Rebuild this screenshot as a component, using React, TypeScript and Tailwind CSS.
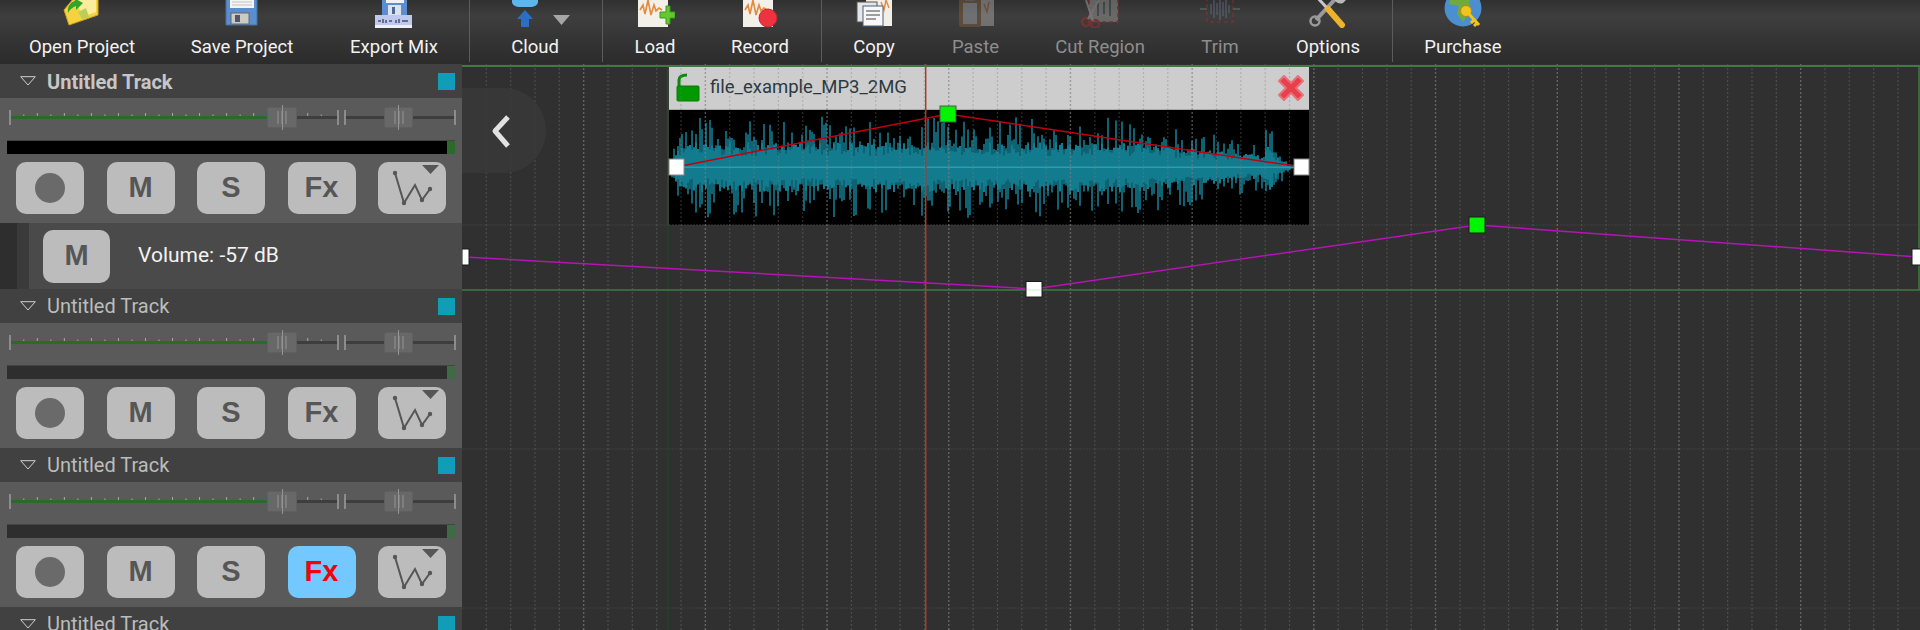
import type { ReactNode } from 'react';

// simple seeded noise so the waveform stays the same on every render
function noise(seed: number) {
  let s = seed;
  return () => {
    s = (s * 16807) % 2147483647;
    return (s - 1) / 2147483646;
  };
}

function waveEnv(x: number) {
  if (x < 14) return 0.15 + (x / 14) * 0.85;
  if (x < 470) return 1;
  if (x < 596) return 1 - ((x - 470) / 126) * 0.55;
  if (x < 604) return 0.95;
  if (x < 625) return 0.5 * (1 - (x - 604) / 21);
  return 0;
}

function buildWave() {
  const rnd = noise(4711);
  let outer = '';
  let inner = '';
  const cy = 56.7;
  for (let x = 3; x < 626; x += 2) {
    const e = waveEnv(x);
    const top = e * (17 + Math.pow(rnd(), 2.4) * 33);
    const bottom = e * (17 + Math.pow(rnd(), 2.4) * 33);
    const innerTop = e * (11 + rnd() * 14);
    const innerBottom = e * (11 + rnd() * 14);
    outer += `M${x} ${(cy - top).toFixed(1)}V${(cy + bottom).toFixed(1)}`;
    inner += `M${x} ${(cy - innerTop).toFixed(1)}V${(cy + innerBottom).toFixed(1)}`;
  }
  return { outer, inner };
}

const wave = buildWave();

const IconOpen = (
  <svg viewBox="0 0 40 40" className="w-10 h-10">
    <path d="M2 22 L7 37 L36 27 L36 10 L12 10 Z" fill="#f5d23e" stroke="#c9a020" />
    <path d="M14 12 L34 11 L34 24 L20 29 Z" fill="#fbec9e" />
    <path d="M16 24 L24 20 L27 29 L20 31 Z" fill="#b9cf58" />
    <path d="M6 25 C5 18 9 14 13 13 L12 10 L21 15 L14 22 L14 18 C11 19 8 21 6 25 Z" fill="#2fa52a" />
  </svg>
);
const IconSave = (
  <svg viewBox="0 0 40 40" className="w-10 h-10">
    <path d="M4 2 H35 V37 H4 Z" fill="#5b8ed0" stroke="#44709f" />
    <rect x="8" y="2" width="24" height="18" fill="#f4f4f4" />
    <path d="M10 14 H30 M10 17 H30" stroke="#c4c4c4" />
    <rect x="9" y="25" width="18" height="11" fill="#cbcbc4" stroke="#666" />
    <rect x="13" y="27" width="5" height="7" fill="#556" />
  </svg>
);
const IconExport = (
  <svg viewBox="0 0 40 40" className="w-10 h-10">
    <path d="M8 0 H33 V28 H8 Z" fill="#5b8ed0" />
    <rect x="12" y="0" width="18" height="15" fill="#f2f2f2" />
    <rect x="14" y="17" width="13" height="10" fill="#dde3ee" />
    <rect x="18" y="19" width="3" height="7" fill="#4d6a94" />
    <rect x="1" y="27" width="37" height="13" fill="#bfc9ee" />
    <rect x="1" y="37" width="37" height="3" fill="#eef0f8" />
    <path d="M4 33h3M9 31v4M12 32v3M15 33h3M22 32v3M25 31v4M28 33h6" stroke="#44546a" strokeWidth="1.5" />
  </svg>
);
const IconCloud = (
  <svg viewBox="0 0 70 40" className="w-[70px] h-10">
    <path d="M12 8 H38 V14 C38 17 34 19 30 19 H20 C16 19 12 17 12 14 Z" fill="#5db5ee" />
    <path d="M25 22 L33 31 H29 V39 H21 V31 H17 Z" fill="#2b6fc4" />
    <path d="M53 27 H70 L61.5 37 Z" fill="#a6a6a6" />
  </svg>
);
const Page = () => (
  <>
    <rect x="3" y="6" width="30" height="33" fill="#f3f0ea" />
    <path d="M5 22 l3 -5 l2 9 l3 -14 l3 15 l3 -10 l2 6 l3 -3 l3 2" stroke="#e58a3c" strokeWidth="1.6" fill="none" />
  </>
);
const IconLoad = (
  <svg viewBox="0 0 40 40" className="w-10 h-10">
    <Page />
    <path d="M25 24 H31 V18 H35 V24 H40 V30 H35 V36 H31 V30 H25 Z" fill="#63c832" stroke="#3f9a1e" />
  </svg>
);
const IconRecord = (
  <svg viewBox="0 0 40 40" className="w-10 h-10">
    <Page />
    <circle cx="28" cy="30" r="9" fill="#ee3340" stroke="#c4242e" />
  </svg>
);
const IconCopy = (
  <svg viewBox="0 0 40 40" className="w-10 h-10">
    <rect x="12" y="4" width="26" height="34" fill="#f2efe9" />
    <path d="M27 14 l3 8 l2 -10 l3 8" stroke="#e58a3c" strokeWidth="1.4" fill="none" />
    <rect x="3" y="14" width="20" height="20" fill="#e6e6e6" stroke="#555" />
    <rect x="9" y="18" width="20" height="20" fill="#f8f8f8" stroke="#47607e" />
    <path d="M12 23 H26 M12 27 H26 M12 31 H22" stroke="#444" />
  </svg>
);
const IconPaste = (
  <svg viewBox="0 0 40 40" className="w-10 h-10 opacity-35">
    <rect x="14" y="4" width="24" height="34" fill="#d8d6d2" />
    <path d="M28 16 l3 8 l2 -10" stroke="#c87a3c" strokeWidth="1.4" fill="none" />
    <rect x="3" y="10" width="22" height="29" rx="2" fill="#9c6b3a" />
    <rect x="7" y="15" width="14" height="21" fill="#c8d0d6" />
    <rect x="9" y="7" width="10" height="6" fill="#999" />
  </svg>
);
const IconCut = (
  <svg viewBox="0 0 40 40" className="w-10 h-10 opacity-35">
    <rect x="9" y="5" width="29" height="29" fill="#bbb" stroke="#d22" strokeDasharray="4 3" strokeWidth="1.5" />
    <path d="M18 10 v18 M24 14 v12 M30 10 v18" stroke="#566" strokeWidth="2" />
    <circle cx="6" cy="34" r="4" fill="none" stroke="#e02020" strokeWidth="2.5" />
    <circle cx="15" cy="36" r="4" fill="none" stroke="#e02020" strokeWidth="2.5" />
    <path d="M8 31 L20 10 M13 33 L6 12" stroke="#d8d8d8" strokeWidth="2" />
  </svg>
);
const IconTrim = (
  <svg viewBox="0 0 40 40" className="w-10 h-10 opacity-35">
    <rect x="7" y="9" width="26" height="25" fill="none" stroke="#e02020" strokeDasharray="4 3" strokeWidth="1.5" />
    <path d="M0 21 H7 M33 21 H40" stroke="#8aa" strokeWidth="1.5" />
    <path d="M11 16 v10 M14 12 v18 M17 15 v12 M20 10 v22 M23 14 v14 M26 12 v18 M29 17 v8" stroke="#7f93b8" strokeWidth="1.4" />
  </svg>
);
const IconOptions = (
  <svg viewBox="0 0 40 40" className="w-10 h-10">
    <path d="M30 8 L8 32" stroke="#9a9a9a" strokeWidth="4" />
    <circle cx="7" cy="33" r="4.5" fill="none" stroke="#9a9a9a" strokeWidth="2.5" />
    <path d="M26 6 a7 7 0 0 0 9 9 l3 -3 l-5 -1 l-1 -5 z" fill="#b8b8b8" />
    <path d="M6 6 L20 21" stroke="#c8c8c8" strokeWidth="3" />
    <path d="M20 21 L34 37" stroke="#eeb32c" strokeWidth="6" strokeLinecap="round" />
  </svg>
);
const IconPurchase = (
  <svg viewBox="0 0 40 40" className="w-10 h-10">
    <circle cx="20" cy="20" r="18.5" fill="#4c8fd0" />
    <path d="M8 8 C14 4 24 4 30 8 L26 14 L28 22 L20 34 L14 26 L16 18 L6 16 Z" fill="#6faa3c" />
    <circle cx="23" cy="23" r="5.5" fill="#f2c41e" stroke="#b88a10" />
    <path d="M26 26 L36 37 M31 32 L28 35 M34 35 L31 38" stroke="#f2c41e" strokeWidth="3" />
  </svg>
);

const toolbar: { label: string; width: string; icon: ReactNode; off?: boolean; sep?: string }[] = [
  { label: 'Open Project', width: 'w-[164px]', icon: IconOpen },
  { label: 'Save Project', width: 'w-[156px]', icon: IconSave },
  { label: 'Export Mix', width: 'w-[148px]', icon: IconExport, sep: 'ml-px' },
  { label: 'Cloud', width: 'w-[130px]', icon: IconCloud, sep: 'ml-[2px]' },
  { label: 'Load', width: 'w-[104px]', icon: IconLoad },
  { label: 'Record', width: 'w-[106px]', icon: IconRecord, sep: 'ml-2' },
  { label: 'Copy', width: 'w-[104px]', icon: IconCopy },
  { label: 'Paste', width: 'w-[99px]', icon: IconPaste, off: true },
  { label: 'Cut Region', width: 'w-[150px]', icon: IconCut, off: true },
  { label: 'Trim', width: 'w-[90px]', icon: IconTrim, off: true },
  { label: 'Options', width: 'w-[126px]', icon: IconOptions, sep: 'ml-px' },
  { label: 'Purchase', width: 'w-[140px]', icon: IconPurchase },
];

function Toolbar() {
  return (
    <div className="flex h-16 shrink-0 overflow-hidden bg-linear-to-b from-[#303030] via-[#3e3e3e] via-25% to-[#2b2b2b]">
      {toolbar.map((t) => (
        <div key={t.label} className="flex">
          <div className={`flex flex-col items-center ${t.width}`}>
            <div className="-mt-3 flex h-10 shrink-0 justify-center">{t.icon}</div>
            <span className={`mt-[9px] text-[18.5px] leading-5 ${t.off ? 'text-[#8e8e8e]' : 'text-[#f2f2f2]'}`}>
              {t.label}
            </span>
          </div>
          {t.sep && <div className={`h-[62px] w-px bg-[#5c5c5c] ${t.sep}`} />}
        </div>
      ))}
    </div>
  );
}

function PadButton({ children, active }: { children: ReactNode; active?: boolean }) {
  return (
    <div
      className={`relative flex h-[52px] w-[68px] items-center justify-center rounded-[10px] font-['Liberation_Sans'] text-[29px] font-bold ${
        active ? 'bg-[#73c8ff] text-[#f4000f]' : 'bg-[#bcbcbc] text-[#565656]'
      }`}
    >
      {children}
    </div>
  );
}

function EnvelopeGlyph() {
  return (
    <svg viewBox="0 0 68 52" className="absolute inset-0 h-full w-full">
      <path d="M17 11 L26 41 L37 23 L44 38 L52 27" fill="none" stroke="#565656" strokeWidth="2" />
      <circle cx="17" cy="11" r="2.2" fill="#565656" />
      <circle cx="26" cy="41" r="2.2" fill="#565656" />
      <circle cx="44" cy="38" r="2.2" fill="#565656" />
      <circle cx="52" cy="27" r="2.2" fill="#565656" />
      <path d="M44 3 H61 L52.5 12 Z" fill="#565656" />
    </svg>
  );
}

function Thumb() {
  return (
    <div className="flex h-[21px] items-center justify-center gap-[2px] rounded-[2px] border border-[#5f5f5f] bg-[#686868]">
      <div className="h-[13px] w-[2px] bg-[#7e7e7e]" />
      <div className="relative flex h-[13px] w-[2px] items-center justify-center bg-[#7e7e7e]">
        <div className="h-[25px] w-px shrink-0 bg-[#949494]" />
      </div>
      <div className="h-[13px] w-[2px] bg-[#7e7e7e]" />
    </div>
  );
}

function SliderRow() {
  const ticks = Array.from({ length: 23 }, (_, i) => 23.3 + i * 13.52).filter((x) => x < 262 || x > 300);
  return (
    <div className="relative flex h-[38px] items-center pl-[9px]">
      <svg className="absolute left-0 top-0 h-[38px] w-[340px]" viewBox="0 0 340 38">
        {ticks.map((x, i) => {
          const tall = Math.round((x - 23.3) / 13.52) % 2 === 1;
          return <rect key={i} x={x} y={tall ? 15 : 16.5} width="1" height={tall ? 3 : 1.5} fill="#a8a8a8" />;
        })}
      </svg>
      <div className="h-[15px] w-[2px] bg-[#8c8c8c]" />
      <div className="h-[3px] w-[256px] bg-[#2c6a2c]" />
      <div className="w-[30px]">
        <Thumb />
      </div>
      <div className="h-[3px] w-[40px] bg-[#3e3e3e]" />
      <div className="h-[15px] w-[2px] bg-[#8c8c8c]" />
      <div className="w-[5px]" />
      <div className="h-[15px] w-[2px] bg-[#8c8c8c]" />
      <div className="h-[3px] w-[38px] bg-[#3e3e3e]" />
      <div className="w-[29px]">
        <Thumb />
      </div>
      <div className="h-[3px] w-[41px] bg-[#3e3e3e]" />
      <div className="h-[15px] w-[2px] bg-[#8c8c8c]" />
    </div>
  );
}

function TrackHeader({ bold }: { bold?: boolean }) {
  return (
    <div className="flex h-[34px] shrink-0 items-center bg-[#414141] pl-5 pr-[7px]">
      <svg viewBox="0 0 16 10" className="h-[10px] w-4">
        <path d="M0.7 0.7 H15.3 L8 9 Z" fill="none" stroke="#d0d0d0" strokeWidth="1" />
      </svg>
      <span className={`ml-[11px] text-[20px] leading-6 ${bold ? 'mt-px font-bold text-[#c6c6c6]' : 'text-[#bcbcbc]'}`}>
        Untitled Track
      </span>
      <div className="ml-auto h-[17px] w-[17px] bg-[#119db7]" />
    </div>
  );
}

function Track({ selected, fxOn }: { selected?: boolean; fxOn?: boolean }) {
  return (
    <>
      <TrackHeader bold={selected} />
      <div className="h-[125px] shrink-0 bg-[#5a5a5a]">
        <SliderRow />
        <div className="ml-[7px] mt-1 flex h-[14px] w-[448px] border-t border-[#444444]">
          <div className={`flex-1 ${selected ? 'bg-black' : 'bg-[#2e2e2e]'}`} />
          <div className={`w-2 ${selected ? 'bg-[#2c6a2c]' : 'bg-[#3f6a46]'}`} />
        </div>
        <div className="ml-4 mt-2 flex w-[430px] justify-between">
          <PadButton>
            <div className="h-[30px] w-[30px] rounded-full bg-[#6a6a6a]" />
          </PadButton>
          <PadButton>M</PadButton>
          <PadButton>S</PadButton>
          <PadButton active={fxOn}>Fx</PadButton>
          <PadButton>
            <EnvelopeGlyph />
          </PadButton>
        </div>
      </div>
    </>
  );
}

function AutomationRow() {
  return (
    <div className="flex h-[66px] shrink-0 items-center bg-[#4a4a4a]">
      <div className="h-full w-[17px] bg-[#2e2e2e]" />
      <div className="h-full w-3 bg-[#3a3a3a]" />
      <div className="ml-[14px] flex h-[53px] w-[67px] items-center justify-center rounded-[10px] bg-[#bcbcbc] font-['Liberation_Sans'] text-[29px] font-bold text-[#565656]">
        M
      </div>
      <span className="ml-7 text-[21px] text-[#f2f2f2]">Volume: -57 dB</span>
    </div>
  );
}

function Sidebar() {
  return (
    <div className="flex w-[462px] shrink-0 flex-col overflow-hidden">
      <Track selected />
      <AutomationRow />
      <Track />
      <Track fxOn />
      <TrackHeader />
    </div>
  );
}

function GridLines() {
  const cols = Array.from({ length: 60 }, (_, i) => 486.3 + i * 24.34);
  return (
    <svg viewBox="462 64 1458 566" className="absolute inset-0 h-full w-full">
      {[225, 449, 608].map((y) => (
        <path key={y} d={`M462 ${y}H1920`} stroke="#3f3f3f" strokeDasharray="2 1" />
      ))}
      {cols.map((x, i) => (
        <path
          key={x}
          d={`M${x} 64V630`}
          stroke="#808080"
          strokeOpacity={(i - 4) % 5 === 0 ? 0.65 : 0.36}
          strokeDasharray="2 2"
          strokeWidth={(i - 4) % 5 === 0 ? 1.4 : 1.2}
        />
      ))}
    </svg>
  );
}

function Clip() {
  return (
    <div className="absolute left-[207px] top-[3px] flex h-[158px] w-[640px] flex-col">
      <div className="flex h-[43px] shrink-0 items-center border-b border-[#a8a8a8] bg-[#cdcdcd]">
        <svg viewBox="0 0 24 30" className="ml-[7px] h-[30px] w-6">
          <path d="M3 14 V7 C3 3 6 2 11 2" fill="none" stroke="#0a8a0a" strokeWidth="3" />
          <rect x="1" y="13" width="22" height="15" rx="1" fill="#009900" stroke="#0a7a0a" />
        </svg>
        <span className="ml-[10px] text-[18.5px] text-[#2a3a42]">file_example_MP3_2MG</span>
        <svg viewBox="0 0 30 30" className="ml-auto mr-[3px] h-[30px] w-[30px]">
          <path d="M3 8 L8 3 L15 10 L22 3 L27 8 L20 15 L27 22 L22 27 L15 20 L8 27 L3 22 L10 15 Z" fill="#e8404a" stroke="#e8707a" strokeWidth="2" strokeLinejoin="round" />
        </svg>
      </div>
      <svg viewBox="0 0 640 114" preserveAspectRatio="none" className="h-[115px] w-full bg-black">
        <path d={wave.outer} stroke="#0f6272" strokeWidth="2" />
        <path d={wave.inner} stroke="#137b8e" strokeWidth="2" />
        <path d="M3 56.7H626" stroke="#2a9bb0" strokeWidth="1.5" />
      </svg>
    </div>
  );
}

function Overlay() {
  return (
    <svg viewBox="462 64 1458 566" className="absolute inset-0 h-full w-full">
      <path d="M668 67V225" stroke="#2c5a32" strokeWidth="1" />
      <path d="M668 225V630" stroke="#1f4626" strokeWidth="1" />
      <path d="M925.7 64V630" stroke="#b03a2a" strokeWidth="1.5" />
      <path d="M676 167 L948 114 L1301 167" fill="none" stroke="#c00010" strokeWidth="1.5" />
      <rect x="940" y="106" width="16" height="16" fill="#00f500" stroke="#555" />
      <rect x="1294" y="159" width="15" height="16" fill="#ffffff" stroke="#888" />
      <rect x="669" y="159" width="15" height="16" fill="#ffffff" stroke="#888" />
      <path d="M465 257 L1034 289 L1477 225 L1918 257" fill="none" stroke="#b415b4" strokeWidth="1.5" />
      <rect x="462" y="249" width="7" height="16" fill="#ffffff" stroke="#1a1a1a" />
      <path d="M462 66H1920" stroke="#3f7a44" strokeWidth="2" />
      <path d="M462 290H1920" stroke="#3f7a44" strokeWidth="1.5" />
      <path d="M1919 66V290" stroke="#3f7a44" strokeWidth="1.5" />
      <rect x="1026" y="281.5" width="16" height="15.5" fill="#ffffff" stroke="#1a1a1a" />
      <path d="M1027 290H1041" stroke="#cdeecd" strokeWidth="1" />
      <rect x="1469" y="217" width="16" height="16" fill="#00f500" stroke="#1a1a1a" />
      <rect x="1912" y="249" width="9" height="16" fill="#ffffff" stroke="#1a1a1a" />
    </svg>
  );
}

function Timeline() {
  return (
    <div className="relative flex-1 overflow-hidden bg-[#303030]">
      <Clip />
      <GridLines />
      <div className="absolute left-0 top-6 flex h-[85px] w-[84px] items-center justify-center rounded-r-[42px] bg-[#383838]/90 pr-[7px]">
        <svg viewBox="0 0 24 36" className="h-9 w-6">
          <path d="M19 4 L6 18 L19 33" fill="none" stroke="#e2e2e2" strokeWidth="5" strokeLinejoin="round" />
        </svg>
      </div>
      <Overlay />
    </div>
  );
}

export default function App() {
  return (
    <div className="flex h-[630px] w-[1920px] flex-col overflow-hidden bg-[#303030] font-[Roboto,sans-serif]">
      <Toolbar />
      <div className="flex min-h-0 flex-1">
        <Sidebar />
        <Timeline />
      </div>
    </div>
  );
}
